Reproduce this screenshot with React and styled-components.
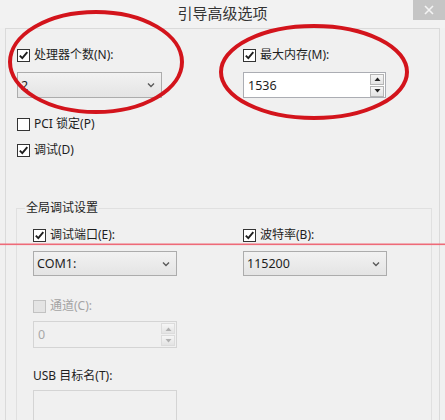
import React from "react";
import styled, { createGlobalStyle } from "styled-components";

const GlobalStyle = createGlobalStyle`
    html, body {
        margin: 0;
        padding: 0;
        background: #f0f0f0;
    }
    body {
        font-family: "Noto Sans", "Noto Sans CJK SC", sans-serif;
        color: #1e1e1e;
    }
`;

const Window = styled.div`
    position: relative;
    width: 445px;
    height: 420px;
    background: #f0f0f0;
    overflow: hidden;
    display: flex;
    flex-direction: column;
`;

const TitleBar = styled.div`
    height: 28px;
    flex: none;
    display: grid;
    grid-template-columns: 1fr auto 1fr;
    align-items: start;
    background: #f2f2f2;
`;

const Title = styled.div`
    grid-column: 2;
    font-family: "Noto Sans CJK SC", sans-serif;
    font-size: 15px;
    line-height: 26px;
    color: #333;
`;

const CloseButton = styled.div`
    grid-column: 3;
    justify-self: end;
    width: 32px;
    height: 20px;
    background: #c5c5c5;
    display: flex;
    align-items: center;
    justify-content: center;
`;

const Panel = styled.div`
    flex: 1;
    margin: 0 5px;
    border: 1px solid #dadada;
    border-bottom: none;
    padding: 19px 7px 0 10px;
`;

const BottomEdge = styled.div`
    height: 3px;
    flex: none;
    background: #fafafa;
`;

const TwoCols = styled.div`
    display: grid;
    grid-template-columns: ${(p) => p.$left}px 1fr;
    padding-left: ${(p) => p.$pad || 0}px;
`;

const Field = styled.div`
    display: flex;
    flex-direction: column;
    margin-top: ${(p) => p.$top || 0}px;
`;

const LabelRow = styled.label`
    height: 14px;
    display: flex;
    align-items: center;
    gap: 4px;
    font-size: 12px;
    line-height: 14px;
    white-space: nowrap;
    color: ${(p) => (p.$disabled ? "#a3a3a3" : "#1e1e1e")};
    margin-top: ${(p) => p.$top || 0}px;
`;

const Box = styled.span`
    width: 13px;
    height: 13px;
    box-sizing: border-box;
    border: 1px solid ${(p) => (p.$disabled ? "#c2c2c2" : "#333")};
    background: ${(p) => (p.$disabled ? "#e4e4e4" : "#fff")};
    display: flex;
    align-items: center;
    justify-content: center;
    flex: none;
`;

const Combo = styled.div`
    box-sizing: border-box;
    width: ${(p) => p.$w}px;
    height: ${(p) => p.$h}px;
    margin-top: ${(p) => p.$top}px;
    border: 1px solid #acacac;
    background: linear-gradient(#f2f2f2, #e4e4e4);
    display: flex;
    align-items: center;
    justify-content: space-between;
    padding: 0 6px 0 3px;
    font-size: 12.5px;
    color: #1e1e1e;
`;

const SpinBox = styled.div`
    box-sizing: border-box;
    width: ${(p) => p.$w}px;
    height: ${(p) => p.$h}px;
    margin-top: ${(p) => p.$top}px;
    border: 1px solid ${(p) => (p.$disabled ? "#d4d4d4" : "#abadb3")};
    background: ${(p) => (p.$disabled ? "#f0f0f0" : "#fff")};
    display: flex;
    align-items: center;
    justify-content: space-between;
    padding: 0 1px 0 4px;
    font-size: 12.5px;
    color: ${(p) => (p.$disabled ? "#a8a8a8" : "#1e1e1e")};
`;

const SpinButtons = styled.div`
    display: flex;
    flex-direction: column;
    gap: 1px;
    width: 14px;
`;

const SpinButton = styled.div`
    height: 11px;
    box-sizing: border-box;
    border: 1px solid ${(p) => (p.$disabled ? "#dcdcdc" : "#b5b5b5")};
    background: linear-gradient(#f6f6f6, #e3e3e3);
    display: flex;
    align-items: center;
    justify-content: center;
`;

const TextBox = styled.div`
    box-sizing: border-box;
    width: 144px;
    height: 40px;
    margin-top: 7px;
    border: 1px solid #d4d4d4;
    background: #f0f0f0;
`;

const Group = styled.fieldset`
    margin: 43px 0 0 0;
    padding: 12px 7px 0 16px;
    border: 1px solid #e0e0e0;
    border-bottom: none;
    min-inline-size: 0;
`;

const Legend = styled.legend`
    margin-left: -8px;
    padding: 0 1px;
    font-size: 12px;
    line-height: 16px;
    color: #1e1e1e;
`;

const Annotations = styled.svg`
    position: absolute;
    inset: 0;
    pointer-events: none;
`;

const Check = ({ checked, disabled }) => (
    <Box $disabled={disabled}>
        {checked && (
            <svg width="11" height="11" viewBox="0 0 11 11">
                <path d="M1.8 5.6 L4.3 8.2 L9.3 2.2" fill="none" stroke="#1e1e1e" strokeWidth="1.9" />
            </svg>
        )}
    </Box>
);

const Chevron = () => (
    <svg width="8" height="6" viewBox="0 0 8 6">
        <path d="M1 1.5 L4 4.5 L7 1.5" fill="none" stroke="#5a5a5a" strokeWidth="1.4" />
    </svg>
);

const Arrow = ({ up, color }) => (
    <svg width="7" height="4" viewBox="0 0 7 4">
        <path d={up ? "M0.5 4 L3.5 0.5 L6.5 4 Z" : "M0.5 0 L3.5 3.5 L6.5 0 Z"} fill={color} />
    </svg>
);

const Spinner = ({ value, w, h, top, disabled }) => (
    <SpinBox $w={w} $h={h} $top={top} $disabled={disabled}>
        <span>{value}</span>
        <SpinButtons>
            <SpinButton $disabled={disabled}>
                <Arrow up color={disabled ? "#b0b0b0" : "#222"} />
            </SpinButton>
            <SpinButton $disabled={disabled}>
                <Arrow color={disabled ? "#b0b0b0" : "#222"} />
            </SpinButton>
        </SpinButtons>
    </SpinBox>
);

const App = () => {
    return (
        <Window>
            <GlobalStyle />
            <TitleBar>
                <Title>引导高级选项</Title>
                <CloseButton>
                    <svg width="10" height="10" viewBox="0 0 10 10">
                        <path d="M1 1 L9 9 M9 1 L1 9" stroke="#f4f4f4" strokeWidth="1.6" />
                    </svg>
                </CloseButton>
            </TitleBar>
            <Panel>
                <TwoCols $left={226} $pad={1}>
                    <Field>
                        <LabelRow>
                            <Check checked />
                            处理器个数(N):
                        </LabelRow>
                        <Combo $w={145} $h={26} $top={10}>
                            <span>2</span>
                            <Chevron />
                        </Combo>
                    </Field>
                    <Field>
                        <LabelRow>
                            <Check checked />
                            最大内存(M):
                        </LabelRow>
                        <Spinner value="1536" w={143} h={26} top={10} />
                    </Field>
                </TwoCols>
                <Field $top={19}>
                    <LabelRow style={{ paddingLeft: 1 }}>
                        <Check />
                        PCI 锁定(P)
                    </LabelRow>
                    <LabelRow $top={12} style={{ paddingLeft: 1 }}>
                        <Check checked />
                        调试(D)
                    </LabelRow>
                </Field>
                <Group>
                    <Legend>全局调试设置</Legend>
                    <TwoCols $left={210}>
                        <Field>
                            <LabelRow>
                                <Check checked />
                                调试端口(E):
                            </LabelRow>
                            <Combo $w={144} $h={25} $top={9}>
                                <span>COM1:</span>
                                <Chevron />
                            </Combo>
                        </Field>
                        <Field>
                            <LabelRow>
                                <Check checked />
                                波特率(B):
                            </LabelRow>
                            <Combo $w={144} $h={25} $top={9}>
                                <span>115200</span>
                                <Chevron />
                            </Combo>
                        </Field>
                    </TwoCols>
                    <Field $top={23}>
                        <LabelRow $disabled>
                            <Check disabled />
                            通道(C):
                        </LabelRow>
                        <Spinner value="0" w={144} h={27} top={8} disabled />
                    </Field>
                    <Field $top={21}>
                        <LabelRow>USB 目标名(T):</LabelRow>
                        <TextBox />
                    </Field>
                </Group>
            </Panel>
            <BottomEdge />
            <Annotations width="445" height="420" viewBox="0 0 445 420">
                <ellipse cx="96" cy="62" rx="86" ry="50" fill="none" stroke="#d3141c" strokeWidth="4" />
                <ellipse cx="314" cy="72" rx="93" ry="46" fill="none" stroke="#d3141c" strokeWidth="4" />
                <rect x="0" y="243.5" width="445" height="1.6" fill="#ee6a78" />
            </Annotations>
        </Window>
    );
};

export default App;
